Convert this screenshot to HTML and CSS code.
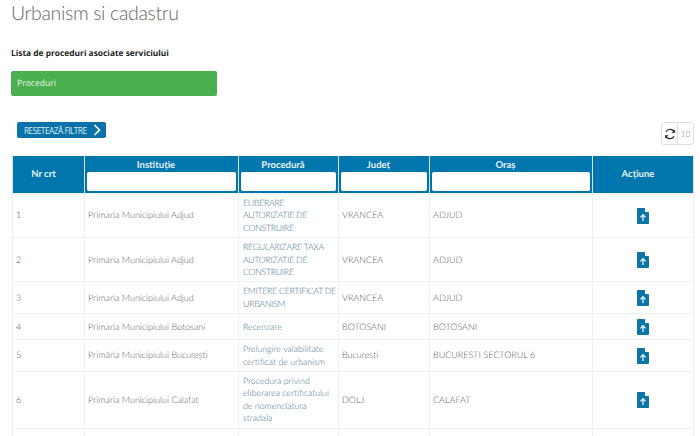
FILE: index.html
```html
<!DOCTYPE html>
<html lang="ro">
<head>
<meta charset="utf-8">
<title>Urbanism si cadastru</title>
<link rel="stylesheet" href="styles.css">
</head>
<body>
<main class="page">
  <h1 class="title">Urbanism si cadastru</h1>
  <p class="subtitle">Lista de proceduri asociate serviciului</p>
  <div class="tab">Proceduri</div>
  <div class="toolbar">
    <button class="reset" type="button"><span class="reset-text">RESETEAZĂ FILTRE</span>
      <svg class="chev" width="9" height="12" viewBox="0 0 9 12"><path d="M1.5 1l5 5-5 5" fill="none" stroke="#fff" stroke-width="1.6"/></svg>
    </button>
    <div class="tools">
      <span class="tool refresh"><svg width="12" height="12" viewBox="0 0 12 12"><path d="M10.5 4.5A4.7 4.7 0 0 0 2 3.6M1.5 7.5A4.7 4.7 0 0 0 10 8.4" fill="none" stroke="#333" stroke-width="1.3"/><path d="M10.9 1.2v3.6H7.4zM1.1 10.8V7.2h3.5z" fill="#333"/></svg></span>
      <span class="tool size">10</span>
    </div>
  </div>
  <table class="grid">
    <colgroup>
      <col class="c1"><col class="c2"><col class="c3"><col class="c4"><col class="c5"><col class="c6">
    </colgroup>
    <thead>
      <tr>
        <th class="plain">Nr crt</th>
        <th class="filter"><span class="label">Instituție</span><input type="text"></th>
        <th class="filter"><span class="label">Procedură</span><input type="text"></th>
        <th class="filter"><span class="label">Județ</span><input type="text"></th>
        <th class="filter"><span class="label">Oraș</span><input type="text"></th>
        <th class="plain">Acțiune</th>
      </tr>
    </thead>
    <tbody>
      <tr><td>1</td><td>Primaria Municipiului Adjud</td><td class="proc caps">ELIBERARE<br>AUTORIZATIE DE<br>CONSTRUIRE</td><td>VRANCEA</td><td>ADJUD</td><td class="act"><svg class="doc" width="12" height="16" viewBox="0 0 12 16"><path d="M1 0h6.5L12 4.5V15a1 1 0 0 1-1 1H1a1 1 0 0 1-1-1V1a1 1 0 0 1 1-1z" fill="#0a76a8"/><path d="M8 .3v3.8h3.7z" fill="#fff"/><path d="M6 13V7M3.5 9.3L6 6.6l2.5 2.7" fill="none" stroke="#fff" stroke-width="1.2"/></svg></td></tr>
      <tr><td>2</td><td>Primaria Municipiului Adjud</td><td class="proc caps">REGULARIZARE TAXA<br>AUTORIZATIE DE<br>CONSTRUIRE</td><td>VRANCEA</td><td>ADJUD</td><td class="act"><svg class="doc" width="12" height="16" viewBox="0 0 12 16"><path d="M1 0h6.5L12 4.5V15a1 1 0 0 1-1 1H1a1 1 0 0 1-1-1V1a1 1 0 0 1 1-1z" fill="#0a76a8"/><path d="M8 .3v3.8h3.7z" fill="#fff"/><path d="M6 13V7M3.5 9.3L6 6.6l2.5 2.7" fill="none" stroke="#fff" stroke-width="1.2"/></svg></td></tr>
      <tr><td>3</td><td>Primaria Municipiului Adjud</td><td class="proc caps">EMITERE CERTIFICAT DE<br>URBANISM</td><td>VRANCEA</td><td>ADJUD</td><td class="act"><svg class="doc" width="12" height="16" viewBox="0 0 12 16"><path d="M1 0h6.5L12 4.5V15a1 1 0 0 1-1 1H1a1 1 0 0 1-1-1V1a1 1 0 0 1 1-1z" fill="#0a76a8"/><path d="M8 .3v3.8h3.7z" fill="#fff"/><path d="M6 13V7M3.5 9.3L6 6.6l2.5 2.7" fill="none" stroke="#fff" stroke-width="1.2"/></svg></td></tr>
      <tr><td>4</td><td>Primaria Municipiului Botosani</td><td class="proc">Recenzare</td><td>BOTOSANI</td><td>BOTOSANI</td><td class="act"><svg class="doc" width="12" height="16" viewBox="0 0 12 16"><path d="M1 0h6.5L12 4.5V15a1 1 0 0 1-1 1H1a1 1 0 0 1-1-1V1a1 1 0 0 1 1-1z" fill="#0a76a8"/><path d="M8 .3v3.8h3.7z" fill="#fff"/><path d="M6 13V7M3.5 9.3L6 6.6l2.5 2.7" fill="none" stroke="#fff" stroke-width="1.2"/></svg></td></tr>
      <tr><td>5</td><td>Primăria Municipiului București</td><td class="proc">Prelungire valabilitate<br>certificat de urbanism</td><td>Bucuresti</td><td>BUCURESTI SECTORUL 6</td><td class="act"><svg class="doc" width="12" height="16" viewBox="0 0 12 16"><path d="M1 0h6.5L12 4.5V15a1 1 0 0 1-1 1H1a1 1 0 0 1-1-1V1a1 1 0 0 1 1-1z" fill="#0a76a8"/><path d="M8 .3v3.8h3.7z" fill="#fff"/><path d="M6 13V7M3.5 9.3L6 6.6l2.5 2.7" fill="none" stroke="#fff" stroke-width="1.2"/></svg></td></tr>
      <tr><td>6</td><td>Primaria Municipiului Calafat</td><td class="proc">Procedura privind<br>eliberarea certificatului<br>de nomenclatura<br>stradala</td><td>DOLJ</td><td>CALAFAT</td><td class="act"><svg class="doc" width="12" height="16" viewBox="0 0 12 16"><path d="M1 0h6.5L12 4.5V15a1 1 0 0 1-1 1H1a1 1 0 0 1-1-1V1a1 1 0 0 1 1-1z" fill="#0a76a8"/><path d="M8 .3v3.8h3.7z" fill="#fff"/><path d="M6 13V7M3.5 9.3L6 6.6l2.5 2.7" fill="none" stroke="#fff" stroke-width="1.2"/></svg></td></tr>
      <tr><td>&nbsp;</td><td></td><td></td><td></td><td></td><td></td></tr>
    </tbody>
  </table>
</main>
</body>
</html>
```
FILE: styles.css
```css
* { box-sizing: border-box; }
html, body { margin: 0; height: 436px; overflow: hidden; background: #fff; }
body { font-family: Lato, "Open Sans", sans-serif; font-size: 10px; color: #777; text-rendering: geometricPrecision; }
.page { padding: 0 6px 0 11px; }
.title { margin: 0; height: 48px; font-family: Lato, sans-serif; font-weight: 300; font-size: 19.5px; letter-spacing: -0.35px; line-height: 28px; color: #666; }
.subtitle { margin: 0; height: 23px; font-family: "Open Sans", sans-serif; font-weight: 700; font-size: 8.4px; line-height: 12px; color: #222; }
.tab { width: 206px; height: 25px; line-height: 25px; padding-left: 6px; background: #4cb050; color: #e8f5e8; border-radius: 2px; font-family: "Open Sans", sans-serif; font-size: 8.6px; }
.toolbar { display: flex; justify-content: space-between; align-items: flex-start; margin-top: 26px; padding-left: 6px; height: 34px; }
.reset { display: flex; align-items: center; justify-content: space-between; width: 89px; height: 16px; padding: 0 4px 0 7px; border: 0; border-radius: 2px; background: #0a72a8; color: #dcecf4; font-family: "Open Sans", sans-serif; font-size: 8.4px; letter-spacing: -0.55px; white-space: nowrap; }
.chev { flex: none; }
.tools { display: flex; width: 33px; height: 23px; border: 1px solid #e0e0e0; border-radius: 3px; }
.tool { display: flex; align-items: center; justify-content: center; }
.refresh { width: 16px; border-right: 1px solid #e0e0e0; }
.size { flex: 1; font-size: 8.5px; font-weight: 300; color: #888; }
.grid { width: 681px; margin-left: 1px; border-collapse: collapse; table-layout: fixed; }
.c1 { width: 72px; } .c2 { width: 154px; } .c3 { width: 100px; } .c4 { width: 91px; } .c5 { width: 163px; } .c6 { width: 101px; }
th { height: 37px; padding: 0 2px; background: #0076ad; color: #e6f2f8; border: 1px solid #d4e6ef; border-top: 0; border-bottom: 0; font-size: 9.5px; font-weight: 700; text-align: center; vertical-align: middle; }
th.plain { padding-right: 12px; }
th.filter { padding: 3px 2px 2px; vertical-align: top; line-height: 13px; }
.label { display: block; padding-right: 11px; }
th input { display: block; width: 100%; height: 19px; border: 0; border-radius: 2px; background: #fff; padding: 0; }
td { height: 26px; padding: 3px 2px 3px 3px; border: 1px solid #eef1f3; font-size: 9px; font-weight: 300; line-height: 12.4px; color: #5c5c5c; vertical-align: middle; overflow: hidden; }
td.proc { color: #4a7590; font-size: 8.8px; padding-left: 4px; white-space: nowrap; }
td.caps { font-size: 8.8px; letter-spacing: -0.3px; }
td.act { text-align: center; padding: 0; }
.doc { display: block; margin: 0 auto; }
```
